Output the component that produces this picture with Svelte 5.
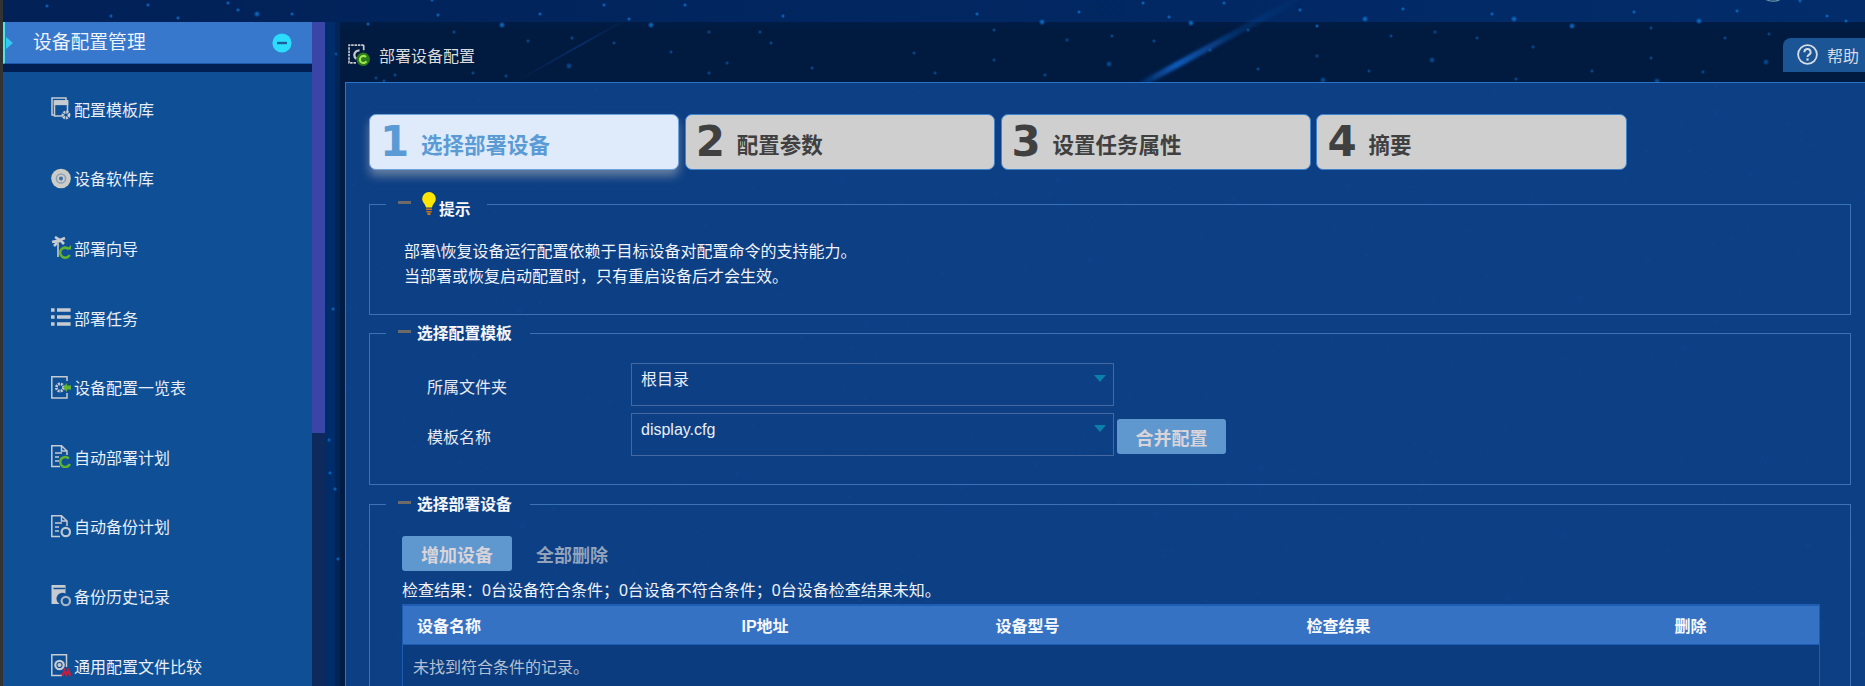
<script>
  const named = [
    [977,14],[1079,12],[1042,22,1],[1143,3],[1224,3],[1169,17],[1191,23,1],[1300,10],[1365,19,1],[1403,9],[1317,26],[1391,36],[1248,30],[994,30],[1112,36],[1067,40],[1154,41],[1210,50],[914,53],[994,60],[1109,64,1],[935,73],[1045,75],[1258,69],[1317,56],[1369,71],[1323,80,1],
    [432,0],[438,15],[540,14],[604,5],[685,5],[783,16],[368,24],[502,25,1],[629,19],[651,25,1],[709,32],[760,32],[771,43],[454,32],[572,38],[528,41],[614,43],[671,52],[727,63],[569,66,1],[812,68],[473,73],[506,76],[709,73],[395,75],[376,78],[384,81],[336,54],
    [1514,19,1],[1492,14],[1572,26,1],[1634,12],[1699,21,1],[1737,11],[1827,16],[1800,1],[1846,21],[1435,32],[1477,38],[1533,47],[1651,28],[1725,38],[1769,34],[1432,60,1],[1651,58],[1766,62,1],[1592,71],[1703,72],[1516,79],[1657,81,1],
    [257,14,1],[178,18],[111,16],[228,3],[47,6],[238,10],[292,14],[148,5],[333,309],[329,440],[330,473],[335,489],[338,559],[318,78],[316,140]
  ];
  let seed = 4217;
  const rnd = () => (seed = (seed * 1664525 + 1013904223) % 4294967296) / 4294967296;
  const scattered = Array.from({ length: 300 }, () => [345 + rnd() * 1520, 84 + rnd() * 600, rnd() > 0.8 ? 1 : 0]);
  const stars = [...named, ...scattered].map(([x, y, big]) => ({
    x, y, r: big ? 3.4 : 2.2, o: y > 27 && y < 82 ? 0.55 : 0.85
  }));

  const menu = [
    { label: '配置模板库', icon: 'template' },
    { label: '设备软件库', icon: 'disc' },
    { label: '部署向导', icon: 'wizard' },
    { label: '部署任务', icon: 'list' },
    { label: '设备配置一览表', icon: 'config' },
    { label: '自动部署计划', icon: 'deploy' },
    { label: '自动备份计划', icon: 'backup' },
    { label: '备份历史记录', icon: 'history' },
    { label: '通用配置文件比较', icon: 'compare' }
  ];
  const steps = [
    { n: 1, t: '选择部署设备', on: true },
    { n: 2, t: '配置参数' },
    { n: 3, t: '设置任务属性' },
    { n: 4, t: '摘要' }
  ];
  const cols = ['设备名称', 'IP地址', '设备型号', '检查结果', '删除'];
</script>

<div class="page">
  <div class="topbar"></div>
  <div class="body">
    <div class="edge"></div>
    <aside class="sidebar">
      <div class="side-head">
        <svg class="arrow" width="7" height="12" viewBox="0 0 7 12"><path d="M0 0L7 6L0 12Z" fill="#35c6f2" /></svg>
        <span class="side-title">设备配置管理</span>
        <svg class="minus" width="20" height="20" viewBox="0 0 20 20"><circle cx="10" cy="10" r="9.6" fill="#2bdcff" /><rect x="5" y="8.8" width="10" height="2.4" fill="#1a5f9c" /></svg>
      </div>
      <div class="side-gap"></div>
      <ul class="side-list">
        {#each menu as m}
          <li class="side-item">
            <svg class="ico" width="20" height="23" viewBox="0 0 20 23" fill="none" stroke="#c6cbd1" stroke-width="1.5">
              {#if m.icon === 'template'}
                <path d="M3 18H1V1H15V4" /><rect x="3.5" y="4" width="13" height="15" /><rect x="3.5" y="4" width="13" height="3.4" fill="#c6cbd1" /><circle cx="15" cy="18" r="3" stroke-width="2.8" stroke-dasharray="2 .8" fill="#0f4f96" />
              {:else if m.icon === 'disc'}
                <circle cx="10" cy="11.5" r="9.8" fill="#cdcbc6" stroke="none" /><circle cx="10" cy="11.5" r="4.6" stroke="#8aa3bc" /><circle cx="10" cy="11.5" r="2" fill="#3c6fa8" stroke="none" />
              {:else if m.icon === 'wizard'}
                <path d="M9 4L1 6M9 4L4 1M9 4L14 2M9 4L3 10M9 4L13 8" stroke-width="2.6" /><path d="M7 6V21" stroke-width="2" stroke="#a8b2bc" /><path d="M17.6 13A5 5 0 1 0 18.6 19" stroke="#5fb22e" stroke-width="2.6" /><path d="M15.5 13.4H20V9Z" fill="#5fb22e" stroke="none" />
              {:else if m.icon === 'list'}
                <path d="M0 4H3.6M6 4H19.6M0 11H3.6M6 11H19.6M0 18H3.6M6 18H19.6" stroke-width="3.6" />
              {:else if m.icon === 'config'}
                <path d="M7 .8H.8V22H16V17M16 5V.8H7" /><circle cx="9" cy="11.5" r="3.6" stroke-width="2.8" stroke-dasharray="2 .9" /><path d="M12 11.5L16 7V9.5H20V13.5H16V16Z" fill="#62b32e" stroke="none" />
              {:else if m.icon === 'deploy'}
                <path d="M9 21.5H.8V.8H10.5L16 6V10M10.5 1V6H16M4 8H11M4 12H8M4 16H8" /><path d="M17.8 13.5A5 5 0 1 0 18.8 19" stroke="#5fb22e" stroke-width="2.6" />
              {:else if m.icon === 'backup'}
                <path d="M9 21.5H.8V.8H10.5L16 6V11M10.5 1V6H16M4 8H11M4 12H8M4 16H8" /><circle cx="14.8" cy="17" r="4.2" stroke-width="2.2" stroke="#bcc6d0" />
              {:else if m.icon === 'history'}
                <path d="M.5 1H14.5V9.5A6 6 0 0 0 8.5 20H.5Z" fill="#c6cbd1" stroke="none" /><path d="M2.5 4.5H14" stroke="#0f4f96" /><circle cx="14.8" cy="17" r="4.2" stroke-width="2.2" stroke="#a4b4c4" />
              {:else}
                <path d="M11 21.5H.8V.8H15.5V13" /><circle cx="8.5" cy="11" r="4.2" stroke-width="2.2" /><circle cx="8.5" cy="11" r="1.3" fill="#c6cbd1" /><path d="M11.5 22L13.5 16.5L15.5 20.5L17.5 16.5L19.5 22" stroke="#d01838" stroke-width="2.2" />
              {/if}
            </svg>
            <span>{m.label}</span>
          </li>
        {/each}
      </ul>
    </aside>
    <div class="scroll"><div class="thumb"></div></div>
    <div class="gutter"></div>
    <main class="main">
      <header class="head">
        <svg class="head-ico" width="22" height="22" viewBox="0 0 21 21" fill="none" stroke="#c8c8c8" stroke-width="1.6">
          <path d="M15 1H1V18H8" stroke-dasharray="2.4 .8" /><path d="M15 1V6" /><path d="M11 6A5 5 0 0 0 6 10.5A4 4 0 0 0 8 14" stroke-width="2.2" />
          <circle cx="14.5" cy="14.5" r="6.4" fill="#2a7a1a" stroke="none" /><path d="M17.2 12.4A3.4 3.4 0 1 0 17.6 16.6" stroke="#a0e650" stroke-width="2" />
        </svg>
        <span class="head-title">部署设备配置</span>
        <div class="help">
          <svg width="21" height="21" viewBox="0 0 21 21" fill="none"><circle cx="10.5" cy="10.5" r="9.4" stroke="#d4dce6" stroke-width="1.8" /><path d="M7.4 8.2A3.1 3.1 0 1 1 11.6 11C10.8 11.6 10.5 12 10.5 13" stroke="#d4dce6" stroke-width="1.9" /><rect x="9.4" y="14.4" width="2.2" height="2.2" fill="#d4dce6" /></svg>
          <span>帮助</span>
        </div>
      </header>
      <section class="panel">
        <div class="steps">
          {#each steps as s}
            <div class="step" class:on={s.on}>
              <span class="num">{s.n}</span>
              <span class="stxt">{s.t}</span>
            </div>
          {/each}
        </div>

        <div class="fs fs-tip">
          <div class="legend">
            <i class="dash"></i>
            <svg class="bulb" width="14" height="23" viewBox="0 0 14 23"><path d="M7 0A6.8 6.8 0 0 0 .2 6.8C.2 10.2 3 11.5 4 15.5H10C11 11.5 13.8 10.2 13.8 6.8A6.8 6.8 0 0 0 7 0Z" fill="#ffe600" /><path d="M4 16.5H10V18H4ZM4.4 19H9.6V20.5H4.4ZM5.5 21H8.5V23H5.5Z" fill="#c9781a" /></svg>
            <b class="tip-t">提示</b>
          </div>
          <p>部署\恢复设备运行配置依赖于目标设备对配置命令的支持能力。</p>
          <p>当部署或恢复启动配置时，只有重启设备后才会生效。</p>
        </div>

        <div class="fs fs-form">
          <div class="legend wide"><i class="dash"></i><b>选择配置模板</b></div>
          <div class="form">
            <label for="f1">所属文件夹</label>
            <div class="select" id="f1"><span>根目录</span><i class="tri"></i></div>
            <span></span>
            <label for="f2">模板名称</label>
            <div class="select" id="f2"><span>display.cfg</span><i class="tri"></i></div>
            <button class="btn merge">合并配置</button>
          </div>
        </div>

        <div class="fs fs-dev">
          <div class="legend wide"><i class="dash"></i><b>选择部署设备</b></div>
          <div class="tools">
            <button class="btn add">增加设备</button>
            <span class="delall">全部删除</span>
          </div>
          <div class="result">检查结果：0台设备符合条件；0台设备不符合条件；0台设备检查结果未知。</div>
          <table>
            <colgroup><col class="c1" /><col class="c2" /><col class="c3" /><col class="c4" /><col class="c5" /></colgroup>
            <thead><tr>{#each cols as c}<th>{c}</th>{/each}</tr></thead>
            <tbody><tr><td colspan="5">未找到符合条件的记录。</td></tr></tbody>
          </table>
        </div>
      </section>
    </main>
  </div>

  <svg class="sky" width="1865" height="686" viewBox="0 0 1865 686" aria-hidden="true">
    <defs>
      <radialGradient id="star"><stop offset="0" stop-color="#1286e6" /><stop offset=".45" stop-color="#0c6cc8" stop-opacity=".75" /><stop offset="1" stop-color="#0c6cc8" stop-opacity="0" /></radialGradient>
      <linearGradient id="beam" gradientUnits="userSpaceOnUse" x1="1140" y1="85" x2="1305" y2="-5">
        <stop offset="0" stop-color="#0d5cc0" stop-opacity=".2" /><stop offset=".22" stop-color="#0f60c4" stop-opacity=".95" /><stop offset=".6" stop-color="#0c4fa8" stop-opacity=".35" /><stop offset="1" stop-color="#0c4fa8" stop-opacity="0" />
      </linearGradient>
      <linearGradient id="beam2" gradientUnits="userSpaceOnUse" x1="515" y1="82" x2="625" y2="20">
        <stop offset="0" stop-color="#0c3f88" stop-opacity="0" /><stop offset=".6" stop-color="#0c3f88" stop-opacity=".55" /><stop offset="1" stop-color="#0c3f88" stop-opacity="0" />
      </linearGradient>
      <filter id="soft" x="-20%" y="-40%" width="140%" height="180%"><feGaussianBlur stdDeviation="1.6" /></filter>
    </defs>
    <line x1="1140" y1="85" x2="1305" y2="-5" stroke="url(#beam)" stroke-width="6" filter="url(#soft)" />
    <line x1="515" y1="82" x2="625" y2="20" stroke="url(#beam2)" stroke-width="2" />
    {#each stars as s}
      <circle cx={s.x} cy={s.y} r={s.r} fill="url(#star)" opacity={s.o} />
    {/each}
    <ellipse cx="1773" cy="-6" rx="11" ry="7.2" fill="none" stroke="#6c98a4" stroke-width="1.2" />
  </svg>
</div>

<style>
  :global(body) { margin: 0; background: #012a66; }
  .page {
    position: relative;
    width: 1865px;
    height: 686px;
    overflow: hidden;
    display: flex;
    flex-direction: column;
    background: linear-gradient(90deg, #012157, #022c6a);
    font-family: "Liberation Sans", "Noto Sans CJK SC", sans-serif;
    color: #fff;
  }
  .sky { position: absolute; inset: 0; z-index: 1; pointer-events: none; }
  .topbar { height: 22px; flex: none; }
  .body { flex: 1; display: flex; min-height: 0; }
  .edge { width: 3px; background: #333; flex: none; margin-top: -22px; position: relative; z-index: 3; }

  .sidebar { width: 309px; flex: none; display: flex; flex-direction: column; position: relative; z-index: 2; }
  .side-head {
    height: 41px;
    flex: none;
    background: #3778cc;
    border-bottom: 1px solid #1d58a8;
    border-left: 2px solid #4fe6e6;
    display: flex;
    align-items: center;
    box-sizing: content-box;
  }
  .arrow { margin-left: 1px; }
  .side-title { margin-left: 20px; font-size: 18.8px; line-height: 24px; margin-top: 1px; color: #eef3fa; }
  .minus { margin-left: auto; margin-right: 20px; }
  .side-gap { height: 8px; flex: none; background: #011f52; }
  .side-list {
    flex: 1;
    list-style: none;
    margin: 0;
    padding: 2px 0 0;
    background: #0f4f96;
  }
  .side-item {
    height: 69.6px;
    display: flex;
    align-items: center;
    padding-left: 48px;
    font-size: 16px;
    color: #e8eef6;
  }
  .ico { flex: none; margin-right: 6px; }
  .side-item span { margin-left: -3px; }

  .scroll { width: 13px; flex: none; background: #0e2a5c; position: relative; z-index: 2; }
  .thumb { height: 411px; background: #3a45a8; }
  .gutter { width: 15px; flex: none; background: linear-gradient(90deg, #012c6a 66%, #012556 66%); }

  .main { flex: 1; min-width: 0; display: flex; flex-direction: column; background: #011c44; }
  .head {
    height: 55px;
    flex: none;
    margin-top: 5px;
    display: flex;
    align-items: center;
    padding-left: 8px;
    background: #011a40;
    position: relative;
  }
  .head-ico { position: relative; z-index: 2; }
  .head-title { margin-left: 9px; font-size: 16px; color: #dcdcdc; position: relative; z-index: 2; }
  .help {
    margin-left: auto;
    width: 82px;
    height: 34px;
    box-sizing: border-box;
    padding-left: 14px;
    display: flex;
    align-items: center;
    gap: 9px;
    background: #1c5596;
    border-top-left-radius: 8px;
    font-size: 16px;
    color: #d4dce6;
    white-space: nowrap;
    position: relative;
    z-index: 2;
    overflow: hidden;
  }

  .panel {
    flex: 1;
    margin-left: 5px;
    box-sizing: border-box;
    border-top: 1px solid #2a74cc;
    border-left: 1px solid #2a74cc;
    padding: 31px 14px 0 23px;
    background: rgba(14, 65, 135, 0.955);
    position: relative;
    z-index: 2;
  }
  .steps { display: flex; gap: 5.5px; }
  .step {
    width: 310.3px;
    height: 56px;
    box-sizing: border-box;
    border: 1px solid #3f83cc;
    border-radius: 7px;
    background: #cfcfcf;
    color: #404040;
    display: flex;
    align-items: center;
    padding-left: 10px;
    font-weight: 700;
  }
  .step.on {
    background: #dfebfb;
    color: #5b9bd5;
    border-color: #6ba3dc;
    box-shadow: 0 6px 10px rgba(190, 190, 190, 0.5);
  }
  .num { font-family: "DejaVu Sans", sans-serif; font-size: 42px; line-height: 1; width: 41px; }
  .stxt { font-size: 21.5px; margin-top: 3px; }

  .fs {
    position: relative;
    box-sizing: border-box;
    width: 1482px;
    border: 1px solid #3a72b4;
  }
  .fs-tip { margin-top: 34px; height: 111px; padding: 34px 0 0 34px; }
  .fs-tip p { margin: 0; font-size: 16px; line-height: 25px; color: #f0f4fa; }
  .fs-form { margin-top: 18px; height: 152px; padding: 29px 0 0 57px; }
  .fs-dev { margin-top: 19px; height: 220px; padding: 31px 30px 0 32px; }

  .legend {
    position: absolute;
    top: -4px;
    left: 16px;
    height: 6px;
    box-sizing: border-box;
    width: 101px;
    padding-left: 12px;
    display: flex;
    align-items: center;
    background: #0d3f84;
    font-size: 15.8px;
    color: #f4f6fa;
  }
  .legend.wide { width: 144px; }
  .legend b { margin-left: 6px; margin-top: -1px; white-space: nowrap; }
  .dash { width: 13px; height: 3px; background: #6d6a68; flex: none; margin-top: -3px; }
  .bulb { margin-left: 11px; margin-top: -2px; flex: none; }
  .legend .tip-t { margin-left: 3px; margin-top: 9px; }

  .form { display: grid; grid-template-columns: 204px 483px auto; row-gap: 7px; }
  .form label { font-size: 16px; color: #e4eaf2; align-self: center; margin-top: 2px; }
  .select {
    height: 43px;
    box-sizing: border-box;
    border: 1px solid #46689f;
    padding: 4px 7px 0 9px;
    display: flex;
    justify-content: space-between;
    align-items: flex-start;
    font-size: 16px;
    line-height: 24px;
    color: #e8eef6;
  }
  .tri {
    margin-top: 7px;
    width: 0;
    height: 0;
    border-left: 6px solid transparent;
    border-right: 6px solid transparent;
    border-top: 7px solid #0a80aa;
  }
  .btn {
    font: inherit;
    font-weight: 700;
    font-size: 18px;
    border: 0;
    border-radius: 3px;
    background: #5f98cf;
    color: #d9d4da;
    padding: 0;
  }
  .merge { width: 109px; height: 35px; margin: 6px 0 0 3px; }
  .tools { display: flex; align-items: center; }
  .add { width: 110px; height: 35px; }
  .delall { margin-left: 24px; font-size: 18px; font-weight: 700; color: #93a3bb; }
  .result { margin-top: 7px; font-size: 16px; line-height: 26px; color: #eef2f8; white-space: nowrap; }

  table {
    width: 1417px;
    margin-top: 0;
    border-collapse: collapse;
    table-layout: fixed;
    border: 1px solid #1f5db4;
    border-top: 2px solid #1f5db4;
  }
  .c1 { width: 325px; }
  .c2 { width: 254px; }
  .c3 { width: 311px; }
  .c4 { width: 368px; }
  .c5 { width: 159px; }
  th {
    height: 38px;
    padding: 0 0 0 14px;
    background: #3672c4;
    border-bottom: 1px solid #1f5db4;
    font-size: 16px;
    text-align: left;
    color: #f6f8fc;
  }
  td { height: 42px; padding: 0 0 6px 10px; font-size: 16px; color: #b4c0d2; background: #0c3c80; }
</style>
